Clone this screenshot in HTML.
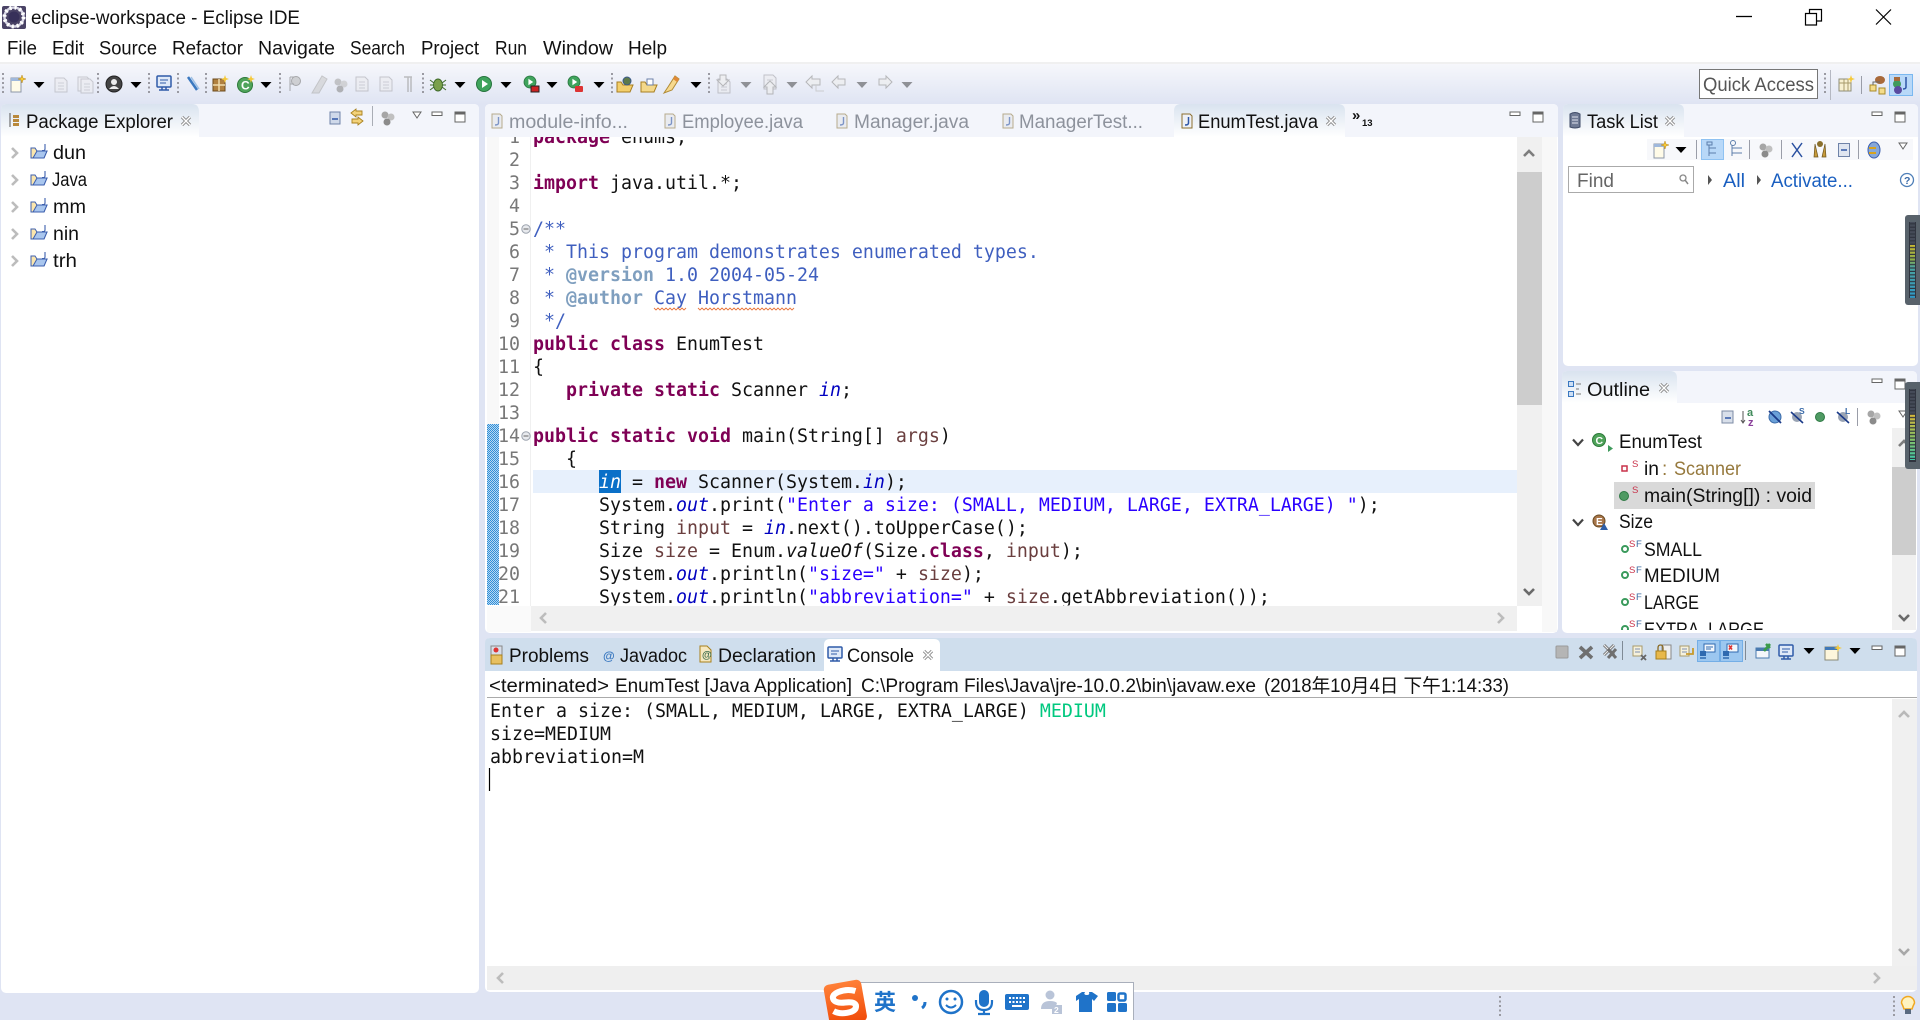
<!DOCTYPE html>
<html lang="en"><head><meta charset="utf-8"><title>eclipse-workspace - Eclipse IDE</title>
<style>
html,body{margin:0;padding:0;width:1920px;height:1020px;overflow:hidden;background:#fff}
svg{display:block}
text{font-family:"Liberation Sans","Noto Sans CJK SC",sans-serif;font-size:19px;fill:#111;white-space:pre}
.m text,text.m,.m tspan{font-family:"DejaVu Sans Mono","Liberation Mono",monospace;font-size:18.27px}
.ln text{fill:#787878;text-anchor:end}
.k{fill:#7f0055;font-weight:bold}.c{fill:#3f5fbf}.t{fill:#7f9fbf;font-weight:bold}.s{fill:#2a00ff}.f{fill:#0000c0;font-style:italic}.v{fill:#6a3e3e}
.g text{fill:#8d929c}
</style></head><body>
<svg width="1920" height="1020" viewBox="0 0 1920 1020" xmlns="http://www.w3.org/2000/svg">
<defs>
<linearGradient id="tb" x1="0" y1="0" x2="0" y2="1"><stop offset="0" stop-color="#f6f7fb"/><stop offset="1" stop-color="#dfe4f3"/></linearGradient>
<linearGradient id="at" x1="0" y1="0" x2="0" y2="1"><stop offset="0" stop-color="#d9e3ef"/><stop offset="1" stop-color="#ffffff"/></linearGradient>
<linearGradient id="og" x1="0" y1="0" x2="0" y2="1"><stop offset="0" stop-color="#ff8038"/><stop offset="1" stop-color="#f04a08"/></linearGradient>
<pattern id="chk" width="2" height="2" patternUnits="userSpaceOnUse"><rect width="2" height="2" fill="#b8d8f2"/><rect width="1" height="1" fill="#2f8fd8"/><rect x="1" y="1" width="1" height="1" fill="#2f8fd8"/></pattern>
<pattern id="stripe" width="5" height="3.400" patternUnits="userSpaceOnUse"><rect y="2.200" width="5" height="1.200" fill="#30343f"/></pattern>
<clipPath id="ed"><rect x="487" y="137" width="1030" height="468.500"/></clipPath>
<clipPath id="ol"><rect x="1566" y="428" width="326" height="202"/></clipPath>
<g id="x"><path d="M-4-4L4 4M4-4L-4 4" stroke="#8a8a8a" stroke-width="3.200" fill="none"/><path d="M-4-4L4 4M4-4L-4 4" stroke="#fff" stroke-width="1.300" fill="none"/></g>
<g id="min"><rect x="-5" y="-2" width="10" height="3.500" fill="#fff" stroke="#666" stroke-width="1"/></g>
<g id="max"><rect x="-5" y="-5" width="10" height="10" fill="#fff" stroke="#666" stroke-width="1"/><rect x="-5" y="-5" width="10" height="2.500" fill="#666"/></g>
<path id="da" d="M-5.500-3H5.500L0 3Z" fill="#000"/>
<path id="vm" d="M-4-3H4L0 3Z" fill="#fff" stroke="#666" stroke-width="1"/>
<path id="cu" d="M-5 3L0-2L5 3" fill="none" stroke="#b9b9b9" stroke-width="2.600"/>
<path id="cd" d="M-5-3L0 2L5-3" fill="none" stroke="#a8a8a8" stroke-width="2.600"/>
<path id="cuD" d="M-5 3L0-2L5 3" fill="none" stroke="#7d7d7d" stroke-width="2.600"/>
<path id="cdD" d="M-5-3L0 2L5-3" fill="none" stroke="#6a6a6a" stroke-width="2.600"/>
<path id="cl" d="M3-5L-2 0L3 5" fill="none" stroke="#bcbcbc" stroke-width="2.600"/>
<path id="cr" d="M-3-5L2 0L-3 5" fill="none" stroke="#bcbcbc" stroke-width="2.600"/>
<g id="grip"><line y1="-11" y2="11" stroke="#9a9aa2" stroke-width="2" stroke-dasharray="2 2.500"/></g>
<g id="jd"><path d="M-5-7H3L5-5V7H-5Z" fill="#e9ebf0" stroke="#b7ab8c"/><path d="M1.500-4V2Q1.500 4-2 4" fill="none" stroke="#7d94c6" stroke-width="1.400"/></g>
<g id="jda"><path d="M-5-7H3L5-5V7H-5Z" fill="#eef1f7" stroke="#8d6f2e"/><path d="M1.500-4V2Q1.500 4-2 4" fill="none" stroke="#2f56a6" stroke-width="1.500"/></g>
<g id="prj"><path d="M-8-4V6H5L8-1H-2L-4-4Z" fill="#fbe6ad" stroke="#3c5fae"/><path d="M-6 6L-2-1H8L5 6Z" fill="#a9c6ee" stroke="#3c5fae"/><path d="M6-8V-3Q6-1 3-1.500" fill="none" stroke="#3c5fae" stroke-width="1.100"/></g>
<g id="new"><path d="M-6-6H4V8H-6Z" fill="#fffbe8" stroke="#8d97a8"/><rect x="-6" y="-6" width="10" height="3" fill="#9fb8dc"/><path d="M5-9L6-6L9-5L6-4L5-1L4-4L1-5L4-6Z" fill="#f5c93a" stroke="#b8861a" stroke-width=".5"/></g>
<g id="gdoc"><path d="M-6-7H3L6-4V7H-6Z" fill="#ececef" stroke="#a9a9b0"/><path d="M-3-2H3M-3 1H3M-3 4H3" stroke="#b8b8bf"/></g>
<circle id="gd" r="4.500" fill="#4f9a63" stroke="#2e7a44"/>
<g id="sf"><circle r="3" fill="#fff" stroke="#3a9a5c" stroke-width="2"/><text x="4" y="-2" style="font-size:9.500px;fill:#c8324a">S</text><text x="11" y="-2" style="font-size:9.500px;fill:#3a6aa0">F</text></g>
<g id="gray"><circle cx="-3" cy="-3" r="3.500" fill="#a6a6a6"/><circle cx="3" cy="-1" r="3.500" fill="#c0c0c0"/><circle cx="-1" cy="4" r="3.500" fill="#8b8b8b"/></g>
<g id="mon"><rect x="-7" y="-7" width="14" height="11" rx="1" fill="#dfe9f8" stroke="#2f5aa8" stroke-width="1.500"/><path d="M-4-3H4M-4 0H2" stroke="#2f5aa8"/><path d="M-5 7H5M-2 4V7M2 4V7" stroke="#2f5aa8" stroke-width="1.500"/></g>
<g id="run"><circle r="7.500" fill="#3fa35c" stroke="#26733d"/><path d="M-2-4L4 0L-2 4Z" fill="#fff"/></g>
<g id="mt"><rect x="-5" y="-5" width="9" height="10" fill="#f6f1dc" stroke="#a89a6b"/><path d="M-3-2H2M-3 1H2" stroke="#7f8fb0"/></g>
<linearGradient id="led1" x1="0" y1="0" x2="0" y2="1"><stop offset="0" stop-color="#c8b832"/><stop offset=".28" stop-color="#8cae4a"/><stop offset=".42" stop-color="#4aa3a0"/><stop offset="1" stop-color="#2f9ac8"/></linearGradient>
<linearGradient id="led2" x1="0" y1="0" x2="0" y2="1"><stop offset="0" stop-color="#d8b83a"/><stop offset=".5" stop-color="#8cc062"/><stop offset="1" stop-color="#3fc8a8"/></linearGradient>
</defs>

<!-- window -->
<rect width="1920" height="62" fill="#fff"/>
<rect y="62" width="1920" height="2" fill="#f0f0f0"/>
<rect y="64" width="1920" height="40" fill="url(#tb)"/>
<rect y="104" width="1920" height="916" fill="#dfe4f3"/>

<!-- title -->
<g transform="translate(14,17)"><rect x="-12" y="-11" width="24" height="23" rx="2" fill="#4a4366"/><circle r="9.500" fill="none" stroke="#d9d7e6" stroke-width="2.500"/><circle r="9.500" fill="none" stroke="#fff" stroke-width="4" stroke-dasharray="2 3"/><circle r="5.500" fill="#37305a"/></g>
<text x="31" y="24" textLength="269" lengthAdjust="spacingAndGlyphs">eclipse-workspace - Eclipse IDE</text>
<path d="M1736 16.500H1752" stroke="#000" stroke-width="1.300"/>
<path d="M1805.500 13.500H1816.500V25H1805.500ZM1809.500 13.500V9.500H1821.500V21H1816.500" fill="none" stroke="#000" stroke-width="1.200"/>
<path d="M1876 9.500L1891 24.500M1891 9.500L1876 24.500" stroke="#000" stroke-width="1.200"/>

<!-- menu -->
<g>
<text x="7" y="54.500" textLength="30" lengthAdjust="spacingAndGlyphs">File</text>
<text x="52" y="54.500" textLength="32" lengthAdjust="spacingAndGlyphs">Edit</text>
<text x="99" y="54.500" textLength="58" lengthAdjust="spacingAndGlyphs">Source</text>
<text x="172" y="54.500" textLength="71" lengthAdjust="spacingAndGlyphs">Refactor</text>
<text x="258" y="54.500" textLength="77" lengthAdjust="spacingAndGlyphs">Navigate</text>
<text x="350" y="54.500" textLength="55" lengthAdjust="spacingAndGlyphs">Search</text>
<text x="421" y="54.500" textLength="58" lengthAdjust="spacingAndGlyphs">Project</text>
<text x="495" y="54.500" textLength="32" lengthAdjust="spacingAndGlyphs">Run</text>
<text x="543" y="54.500" textLength="70" lengthAdjust="spacingAndGlyphs">Window</text>
<text x="628" y="54.500" textLength="39" lengthAdjust="spacingAndGlyphs">Help</text>
</g>

<!-- toolbar -->
<g transform="translate(0,1)">
<use href="#grip" x="3" y="83"/><use href="#new" x="17" y="83"/><use href="#da" x="39" y="84"/>
<g opacity=".55"><use href="#gdoc" x="61" y="84"/><use href="#gdoc" x="84" y="83"/><use href="#gdoc" x="87" y="85"/></g>
<use href="#grip" x="98" y="83"/>
<g transform="translate(114,83)"><circle r="8" fill="#444" stroke="#222"/><circle cy="-2" r="3" fill="#eee"/><path d="M-5 5Q0-1 5 5Z" fill="#eee"/></g><use href="#da" x="136" y="84"/>
<use href="#grip" x="149" y="83"/><use href="#mon" x="164" y="82"/><use href="#grip" x="178" y="83"/>
<g transform="translate(193,83)"><path d="M-5-7L4 6" stroke="#3a78c0" stroke-width="2.500"/><path d="M-2-7L6 5" stroke="#9dbfe4" stroke-width="1.500"/></g>
<use href="#grip" x="206" y="83"/>
<g transform="translate(219,84)"><rect x="-6" y="-6" width="12" height="12" fill="#b08040" stroke="#6b4a1c"/><path d="M-6 0H6M0-6V6" stroke="#f0dcae" stroke-width="1.500"/><path d="M6-10L7-7L10-6L7-5L6-2L5-5L2-6L5-7Z" fill="#f5c93a"/></g>
<g transform="translate(245,84)"><circle r="7.500" fill="#4fa35a" stroke="#2d7a3a"/><text x="-4" y="4.500" style="font-size:12px;font-weight:bold;fill:#fff">C</text><path d="M6-10L7-7L10-6L7-5L6-2L5-5L2-6L5-7Z" fill="#f5c93a"/></g>
<use href="#da" x="266" y="84"/><use href="#grip" x="280" y="83"/>
<g opacity=".6"><g transform="translate(295,83)"><circle cx="1" cy="-3" r="4.500" fill="#bbb" stroke="#777"/><path d="M-5-7V7M-5-7H-1M-5 0H-1" stroke="#777" fill="none"/></g>
<path d="M312 92L322 75L327 78L319 92Z" fill="#ccc" stroke="#aaa"/>
<use href="#gray" x="341" y="84"/><use href="#gdoc" x="362" y="83"/><use href="#gdoc" x="386" y="83"/><path d="M404 76H412M408 76V91M411 76V91" stroke="#999" stroke-width="1.500" fill="none"/></g>
<use href="#grip" x="423" y="83"/>
<g transform="translate(438,84)"><ellipse rx="4.500" ry="6" fill="#7aa04a" stroke="#3e6a2a"/><path d="M-8-5L-4-2M8-5L4-2M-8 5L-4 2M8 5L4 2M-8 0H-4M8 0H4" stroke="#3e6a2a"/></g><use href="#da" x="460" y="84"/>
<use href="#run" x="484" y="83"/><use href="#da" x="506" y="84"/>
<g transform="translate(530,81)"><use href="#run" transform="scale(.8)"/><rect x="1" y="4" width="8" height="6" fill="#c22" stroke="#222"/></g><use href="#da" x="552" y="84"/>
<g transform="translate(574,81)"><use href="#run" transform="scale(.8)"/><rect x="1" y="4" width="8" height="6" rx="1" fill="#d33"/></g><use href="#da" x="599" y="84"/>
<use href="#grip" x="612" y="83"/>
<g transform="translate(625,84)"><path d="M-8-3V7H5L8 0H-2L-4-3Z" fill="#f4cf6c" stroke="#a87f22"/><circle cx="2" cy="-4" r="4" fill="#5f7a4a" stroke="#3a5a8a"/></g>
<g transform="translate(649,84)"><path d="M-8-3V7H5L8 0H-2L-4-3Z" fill="#f4d88a" stroke="#a87f22"/><rect x="-2" y="-6" width="6" height="6" fill="#fff" stroke="#6b7fa8"/></g>
<g transform="translate(672,83)"><path d="M-8 9L-4 3L3-8L7-5L0 6Z" fill="#f7d98e" stroke="#b08b35"/><path d="M3-8L7-5L5-2L1-5Z" fill="#e08a38"/></g><use href="#da" x="696" y="84"/>
<use href="#grip" x="709" y="83"/>
<g opacity=".65"><use href="#gdoc" x="724" y="85"/><path d="M720 74H726V79H729L723 85L717 79H720Z" fill="#eee" stroke="#999"/><use href="#da" x="746" y="84" opacity=".6"/>
<use href="#gdoc" x="770" y="81"/><path d="M767 93V86H764L770 80L776 86H773V93Z" fill="#eee" stroke="#999"/><use href="#da" x="792" y="84" opacity=".6"/>
<path d="M820 78H812V75L806 81L812 87V84H820Z" fill="#eee" stroke="#999"/><path d="M816 84V90H824" fill="none" stroke="#bbb"/>
<path d="M845 78H838V75L832 81L838 87V84H845Z" fill="#eee" stroke="#999"/><use href="#da" x="862" y="84" opacity=".6"/>
<path d="M879 78H886V75L892 81L886 87V84H879Z" fill="#eee" stroke="#999"/><use href="#da" x="907" y="84" opacity=".6"/></g>
</g>

<!-- quick access -->
<rect x="1699.500" y="69.500" width="118" height="29" fill="#fff" stroke="#777"/>
<text x="1703" y="91" textLength="111" lengthAdjust="spacingAndGlyphs" style="fill:#555">Quick Access</text>
<g transform="translate(0,1)">
<use href="#grip" x="1825" y="83"/><line x1="1830.500" y1="69" x2="1830.500" y2="99" stroke="#b5b8c2"/>
<g transform="translate(1845,84)"><rect x="-6" y="-6" width="12" height="12" fill="#f8f0d0" stroke="#8d8d7a"/><path d="M-6-2H6M-1-6V6M3-6V6" stroke="#a89a6b"/><path d="M6-10L7-7L10-6L7-5L6-2L5-5L2-6L5-7Z" fill="#f5c93a"/></g>
<line x1="1861.500" y1="75" x2="1861.500" y2="93" stroke="#9a9da8"/>
<g transform="translate(1877,84)"><ellipse cx="3" cy="-5" rx="5" ry="4" fill="#a8693a"/><rect x="-7" y="0" width="6" height="6" fill="#f4dc8a" stroke="#a88a2a"/><rect x="2" y="3" width="6" height="6" fill="#f4dc8a" stroke="#a88a2a"/><path d="M-4 0V-3H3" stroke="#666" fill="none"/></g>
</g>
<rect x="1889.500" y="74.500" width="23" height="21" fill="#b8d8f8" stroke="#7ab8f0"/>
<g transform="translate(1900,85)"><circle cx="-3" cy="-1" r="4" fill="#3f9a5c"/><circle cx="-2" cy="5" r="4" fill="#5a4aa0"/><rect x="-6" y="-8" width="6" height="4" fill="#a8693a"/><path d="M6-8V2Q6 4 3 4" fill="none" stroke="#2f56a6" stroke-width="1.500"/></g>

<!-- Package Explorer -->
<rect x="1" y="104" width="478" height="889" rx="5" fill="#fff"/>
<path d="M1 137V109Q1 104 6 104H474Q479 104 479 109V137Z" fill="#f3f5fb"/>
<path d="M1 137V109Q1 104 6 104H192Q199 104 199 112V137Z" fill="url(#at)"/>
<g transform="translate(14,120)"><path d="M-4-7V7" stroke="#555"/><rect x="-1" y="-5" width="6" height="3" fill="#b9893c"/><rect x="-1" y="-1" width="6" height="3" fill="#b9893c"/><rect x="-1" y="3" width="6" height="3" fill="#b9893c"/></g>
<text x="26" y="128" textLength="147" lengthAdjust="spacingAndGlyphs">Package Explorer</text>
<use href="#x" x="186" y="121"/>
<g transform="translate(335,118)"><rect x="-5" y="-6" width="10" height="12" fill="#cfd9ea" stroke="#6f83a8"/><path d="M-3 1H3" stroke="#2f56a6" stroke-width="1.500"/></g>
<g transform="translate(357,117)"><path d="M-6-4L-1-8V-6H5V-2H-1V0Z" fill="#f3d27a" stroke="#a8801c" stroke-width=".9"/><path d="M6 4L1 0V2H-5V6H1V8Z" fill="#f3d27a" stroke="#a8801c" stroke-width=".9"/></g>
<line x1="372.500" y1="106" x2="372.500" y2="126" stroke="#a9adb5"/><use href="#gray" x="388" y="118"/>
<use href="#vm" x="417" y="115"/><use href="#min" x="437" y="114"/><use href="#max" x="460" y="117"/>

<use href="#cr" x="15" y="153"/><use href="#cr" x="15" y="180"/><use href="#cr" x="15" y="207"/><use href="#cr" x="15" y="234"/><use href="#cr" x="15" y="261"/>
<use href="#prj" x="39" y="152"/><use href="#prj" x="39" y="179"/><use href="#prj" x="39" y="206"/><use href="#prj" x="39" y="233"/><use href="#prj" x="39" y="260"/>
<text x="53" y="159" textLength="33" lengthAdjust="spacingAndGlyphs">dun</text>
<text x="52" y="186" textLength="35" lengthAdjust="spacingAndGlyphs">Java</text>
<text x="53" y="213" textLength="33" lengthAdjust="spacingAndGlyphs">mm</text>
<text x="53" y="240" textLength="26" lengthAdjust="spacingAndGlyphs">nin</text>
<text x="53" y="267" textLength="24" lengthAdjust="spacingAndGlyphs">trh</text>

<!-- Editor panel -->
<rect x="485" y="104" width="1073" height="529" rx="5" fill="#fff"/>
<path d="M485 137V109Q485 104 490 104H1553Q1558 104 1558 109V137Z" fill="#f3f5fb"/>
<path d="M1174 137V111Q1174 104 1181 104H1338Q1345 104 1345 111V137Z" fill="url(#at)"/>
<g class="g">
<use href="#jd" x="497" y="121"/><text x="509" y="128" textLength="119" lengthAdjust="spacingAndGlyphs">module-info...</text>
<use href="#jd" x="670" y="121"/><text x="682" y="128" textLength="121" lengthAdjust="spacingAndGlyphs">Employee.java</text>
<use href="#jd" x="842" y="121"/><text x="854" y="128" textLength="115" lengthAdjust="spacingAndGlyphs">Manager.java</text>
<use href="#jd" x="1008" y="121"/><text x="1019" y="128" textLength="124" lengthAdjust="spacingAndGlyphs">ManagerTest...</text>
</g>
<use href="#jda" x="1187" y="121"/><text x="1198" y="128" textLength="120" lengthAdjust="spacingAndGlyphs">EnumTest.java</text>
<use href="#x" x="1331" y="121"/>
<text x="1352" y="120" style="font-size:15px;font-weight:bold">»</text><text x="1362" y="126" style="font-size:9.500px;font-weight:bold">13</text>
<use href="#min" x="1515" y="114"/><use href="#max" x="1538" y="117"/>

<rect x="487" y="137" width="12" height="468" fill="#f8f8f8"/>
<rect x="487" y="424" width="12" height="181" fill="url(#chk)"/>
<line x1="530.500" y1="137" x2="530.500" y2="606" stroke="#f0f0f0"/>
<rect x="533" y="470" width="984" height="23" fill="#e7f0fc"/>
<rect x="599" y="470" width="22" height="23" fill="#0a70c8"/>

<g clip-path="url(#ed)">
<g transform="translate(0,1)">
<g class="m ln">
<text x="520" y="142">1</text><text x="520" y="165">2</text><text x="520" y="188">3</text><text x="520" y="211">4</text><text x="520" y="234">5</text><text x="520" y="257">6</text><text x="520" y="280">7</text><text x="520" y="303">8</text><text x="520" y="326">9</text><text x="520" y="349">10</text><text x="520" y="372">11</text><text x="520" y="395">12</text><text x="520" y="418">13</text><text x="520" y="441">14</text><text x="520" y="464">15</text><text x="520" y="487">16</text><text x="520" y="510">17</text><text x="520" y="533">18</text><text x="520" y="556">19</text><text x="520" y="579">20</text><text x="520" y="602">21</text>
</g>
<g class="m">
<text x="533" y="142"><tspan class="k">package</tspan> enums;</text>
<text x="533" y="188"><tspan class="k">import</tspan> java.util.*;</text>
<text x="533" y="234"><tspan class="c">/**</tspan></text>
<text x="533" y="257"><tspan class="c"> * This program demonstrates enumerated types.</tspan></text>
<text x="533" y="280"><tspan class="c"> * </tspan><tspan class="t">@version</tspan><tspan class="c"> 1.0 2004-05-24</tspan></text>
<text x="533" y="303"><tspan class="c"> * </tspan><tspan class="t">@author</tspan><tspan class="c"> Cay Horstmann</tspan></text>
<text x="533" y="326"><tspan class="c"> */</tspan></text>
<text x="533" y="349"><tspan class="k">public</tspan> <tspan class="k">class</tspan> EnumTest</text>
<text x="533" y="372">{</text>
<text x="533" y="395">   <tspan class="k">private</tspan> <tspan class="k">static</tspan> Scanner <tspan class="f">in</tspan>;</text>
<text x="533" y="441"><tspan class="k">public</tspan> <tspan class="k">static</tspan> <tspan class="k">void</tspan> main(String[] <tspan class="v">args</tspan>)</text>
<text x="533" y="464">   {</text>
<text x="533" y="487">      <tspan style="fill:#fff;font-style:italic">in</tspan> = <tspan class="k">new</tspan> Scanner(System.<tspan class="f">in</tspan>);</text>
<text x="533" y="510">      System.<tspan class="f">out</tspan>.print(<tspan class="s">"Enter a size: (SMALL, MEDIUM, LARGE, EXTRA_LARGE) "</tspan>);</text>
<text x="533" y="533">      String <tspan class="v">input</tspan> = <tspan class="f">in</tspan>.next().toUpperCase();</text>
<text x="533" y="556">      Size <tspan class="v">size</tspan> = Enum.<tspan style="font-style:italic">valueOf</tspan>(Size.<tspan class="k">class</tspan>, <tspan class="v">input</tspan>);</text>
<text x="533" y="579">      System.<tspan class="f">out</tspan>.println(<tspan class="s">"size="</tspan> + <tspan class="v">size</tspan>);</text>
<text x="533" y="602">      System.<tspan class="f">out</tspan>.println(<tspan class="s">"abbreviation="</tspan> + <tspan class="v">size</tspan>.getAbbreviation());</text>
</g>
</g>
</g>
<path d="M654 308l2 2l2-2l2 2l2-2l2 2l2-2l2 2l2-2l2 2l2-2l2 2l2-2l2 2l2-2l2 2l2-2M698 308l2 2l2-2l2 2l2-2l2 2l2-2l2 2l2-2l2 2l2-2l2 2l2-2l2 2l2-2l2 2l2-2l2 2l2-2l2 2l2-2l2 2l2-2l2 2l2-2l2 2l2-2l2 2l2-2l2 2l2-2l2 2l2-2l2 2l2-2l2 2l2-2l2 2l2-2l2 2l2-2l2 2l2-2l2 2l2-2l2 2l2-2l2 2l2-2" fill="none" stroke="#e8763c" stroke-width=".9"/>
<g fill="#e8eaee" stroke="#9ba2ad"><circle cx="526" cy="229" r="4.200"/><circle cx="526" cy="436" r="4.200"/></g>
<path d="M523.500 229H528.500M523.500 436H528.500" stroke="#666"/>

<rect x="1517" y="137" width="25" height="469" fill="#f0f0f0"/><rect x="1542" y="137" width="15" height="495" fill="#f8f8f8"/>
<rect x="1517" y="172" width="25" height="233" fill="#cdcdcd"/>
<use href="#cuD" x="1529" y="153"/><use href="#cdD" x="1529" y="592"/>
<rect x="531" y="606" width="986" height="25" fill="#f0f0f0"/><rect x="487" y="606" width="44" height="26" fill="#fafafa"/>
<use href="#cl" x="543" y="618"/><use href="#cr" x="1501" y="618"/>

<!-- Task list -->
<rect x="1563" y="104" width="355" height="262" rx="5" fill="#fff"/>
<path d="M1563 137V109Q1563 104 1568 104H1913Q1918 104 1918 109V137Z" fill="#f3f5fb"/>
<path d="M1563 137V109Q1563 104 1568 104H1677Q1684 104 1684 111V137Z" fill="url(#at)"/>
<g transform="translate(1575,120)"><path d="M-5-6Q0-9 5-6V7Q0 9-5 7Z" fill="#6f7a94" stroke="#3e4a66"/><path d="M-3-3H3M-3 0H3M-3 3H3" stroke="#dfe3ee"/></g>
<text x="1587" y="128" textLength="71" lengthAdjust="spacingAndGlyphs">Task List</text>
<use href="#x" x="1670" y="121"/><use href="#min" x="1877" y="114"/><use href="#max" x="1900" y="117"/>
<rect x="1647" y="139" width="266" height="21" fill="#f7f8fb"/>
<use href="#new" x="1660" y="150"/><use href="#da" x="1681" y="150"/>
<line x1="1696.500" y1="140" x2="1696.500" y2="159" stroke="#9a9da8"/>
<rect x="1701.500" y="139.500" width="22" height="20" fill="#b8d8f8" stroke="#8fc2f2"/>
<g fill="none" stroke="#5c7eab"><path d="M1709 145V156M1709 148H1716M1709 153H1716"/><rect x="1707" y="142" width="5" height="3"/><path d="M1732 145V156M1732 148H1742M1732 153H1742"/><circle cx="1733" cy="143" r="2.500"/></g>
<line x1="1749.500" y1="140" x2="1749.500" y2="159" stroke="#9a9da8"/><use href="#gray" x="1766" y="150"/>
<line x1="1781.500" y1="140" x2="1781.500" y2="159" stroke="#9a9da8"/>
<path d="M1792 143L1802 157M1802 143L1792 157" stroke="#2a50a0" stroke-width="1.500"/>
<g fill="#c79a3a" stroke="#6b5420" stroke-width=".7"><path d="M1815 144L1818 157H1814ZM1825 144L1822 157H1826Z"/></g><circle cx="1820" cy="144" r="3" fill="#8a6f2c"/>
<rect x="1838.500" y="143.500" width="11" height="13" fill="#dfe5f0" stroke="#6f83a8"/><path d="M1841 150H1847" stroke="#2f56a6" stroke-width="1.500"/>
<line x1="1858.500" y1="140" x2="1858.500" y2="159" stroke="#9a9da8"/>
<g transform="translate(1874,150)"><ellipse rx="6" ry="8" fill="#86a7d8" stroke="#3c5fae"/><path d="M-5-2H2M-5 3H2" stroke="#d8a21c" stroke-width="2"/></g>
<use href="#vm" x="1903" y="146"/>
<rect x="1568.500" y="166.500" width="125" height="26" fill="#fff" stroke="#aaa"/>
<text x="1577" y="187" textLength="37" lengthAdjust="spacingAndGlyphs" style="fill:#666">Find</text>
<circle cx="1683" cy="178" r="3" fill="none" stroke="#888" stroke-width="1.300"/><path d="M1685 180L1688 184" stroke="#888" stroke-width="1.500"/>
<path d="M1708 175L1712 180L1708 185Z" fill="#555"/><text x="1723" y="187" textLength="22" lengthAdjust="spacingAndGlyphs" style="fill:#1a5fc0">All</text>
<path d="M1757 175L1761 180L1757 185Z" fill="#555"/><text x="1771" y="187" textLength="82" lengthAdjust="spacingAndGlyphs" style="fill:#1a5fc0">Activate...</text>
<circle cx="1907" cy="180" r="6.500" fill="#fff" stroke="#4f7fb8" stroke-width="1.300"/><text x="1904" y="184" style="font-size:10.500px;font-weight:bold;fill:#3a6aa8">?</text>

<!-- Outline -->
<rect x="1562" y="371" width="355" height="262" rx="5" fill="#fff"/>
<path d="M1562 403V376Q1562 371 1567 371H1912Q1917 371 1917 376V403Z" fill="#f3f5fb"/>
<path d="M1562 403V376Q1562 371 1567 371H1670Q1677 371 1677 378V403Z" fill="url(#at)"/>
<g fill="#cfe0f5" stroke="#3a78c0"><rect x="1568.500" y="381.500" width="5" height="5"/><rect x="1568.500" y="391.500" width="5" height="5"/></g><path d="M1576 384H1581M1576 389H1579M1576 394H1581" stroke="#777"/>
<text x="1587" y="396" textLength="63" lengthAdjust="spacingAndGlyphs">Outline</text>
<use href="#x" x="1664" y="388"/><use href="#min" x="1877" y="381"/><use href="#max" x="1900" y="384"/>
<g transform="translate(1728,417)"><rect x="-6" y="-6" width="11" height="12" fill="#d8dfea" stroke="#7c8ba4"/><path d="M-3 1H3" stroke="#2f56a6" stroke-width="1.500"/></g>
<g transform="translate(1751,417)"><path d="M-8-6V5M-10 3L-8 6L-6 3" fill="none" stroke="#555"/><text x="-4" y="-1" style="font-size:11px;font-weight:bold;fill:#3f8a5a">a</text><text x="-3" y="9" style="font-size:11px;font-weight:bold;fill:#8a3f9a">z</text></g>
<g transform="translate(1775,417)"><circle r="6" fill="#6aa0d8" stroke="#3a6aa8"/><path d="M-6-6L6 6" stroke="#1a3a88" stroke-width="1.800"/></g>
<g transform="translate(1797,417)"><circle r="5" fill="#9aa4b4"/><path d="M-6-5L6 6" stroke="#1a3a88" stroke-width="1.600"/><text x="2" y="-3" style="font-size:8.500px;font-weight:bold;fill:#3a6aa8">S</text></g>
<use href="#gd" x="1820" y="417"/>
<g transform="translate(1843,417)"><circle r="5" fill="#9aa4b4"/><path d="M-6-5L6 6" stroke="#1a3a88" stroke-width="1.600"/><text x="2" y="-3" style="font-size:8.500px;font-weight:bold;fill:#3a6aa8">L</text></g>
<line x1="1857.500" y1="408" x2="1857.500" y2="426" stroke="#9a9da8"/><use href="#gray" x="1874" y="417"/><use href="#vm" x="1903" y="414"/>

<rect x="1614" y="482" width="201" height="27" fill="#d9d9d9"/>
<path d="M1573 439.500L1578 445L1583 439.500M1573 519.500L1578 525L1583 519.500" fill="none" stroke="#444" stroke-width="2.200"/>
<g clip-path="url(#ol)">
<g transform="translate(1599,440)"><circle r="6.500" fill="#4fa35a" stroke="#2d7a3a"/><text x="-3.500" y="4" style="font-size:10.500px;font-weight:bold;fill:#fff">C</text><path d="M9 5L14 8.500L9 12Z" fill="#3f9a5c"/></g>
<text x="1619" y="448" textLength="83" lengthAdjust="spacingAndGlyphs">EnumTest</text>
<rect x="1622" y="466" width="5" height="5" fill="#fff" stroke="#c8324a" stroke-width="1.500"/><text x="1632" y="467" style="font-size:9.500px;fill:#c8324a">S</text>
<text x="1644" y="475" textLength="15" lengthAdjust="spacingAndGlyphs">in</text><text x="1662" y="475" style="fill:#96793d">:</text><text x="1674" y="475" textLength="67" lengthAdjust="spacingAndGlyphs" style="fill:#96793d">Scanner</text>
<use href="#gd" x="1624" y="496"/><text x="1632" y="493" style="font-size:9.500px;fill:#c8324a">S</text>
<text x="1644" y="502" textLength="168" lengthAdjust="spacingAndGlyphs">main(String[]) : void</text>
<g transform="translate(1599,521)"><circle r="6" fill="#a8764a" stroke="#6b4a22"/><text x="-3" y="4" style="font-size:10px;font-weight:bold;fill:#fff">E</text><path d="M1 9L5 2L9 9Z" fill="#2f5fa8"/></g>
<text x="1619" y="528" textLength="34" lengthAdjust="spacingAndGlyphs">Size</text>
<use href="#sf" x="1625" y="549"/><text x="1644" y="556" textLength="58" lengthAdjust="spacingAndGlyphs">SMALL</text>
<use href="#sf" x="1625" y="575"/><text x="1644" y="582" textLength="76" lengthAdjust="spacingAndGlyphs">MEDIUM</text>
<use href="#sf" x="1625" y="602"/><text x="1644" y="609" textLength="55" lengthAdjust="spacingAndGlyphs">LARGE</text>
<use href="#sf" x="1625" y="629"/><text x="1644" y="636" textLength="120" lengthAdjust="spacingAndGlyphs">EXTRA_LARGE</text>
</g>
<rect x="1892" y="428" width="24" height="202" fill="#f0f0f0"/><rect x="1892" y="467" width="24" height="88" fill="#cdcdcd"/>
<use href="#cuD" x="1904" y="443"/><use href="#cdD" x="1904" y="618"/>

<!-- meters -->
<g>
<rect x="1905" y="215" width="20" height="90" rx="3" fill="#58626b"/><rect x="1909" y="222" width="7" height="76" fill="#30343f"/>
<rect x="1910" y="245" width="5" height="53" fill="url(#led1)"/><rect x="1910" y="222" width="5" height="23" fill="#454b58"/><rect x="1910" y="222" width="5" height="76" fill="url(#stripe)"/>
<rect x="1905" y="382" width="20" height="87" rx="3" fill="#58626b"/><rect x="1909" y="389" width="7" height="73" fill="#30343f"/>
<rect x="1910" y="414" width="5" height="46" fill="url(#led2)"/><rect x="1910" y="389" width="5" height="25" fill="#454b58"/><rect x="1910" y="389" width="5" height="71" fill="url(#stripe)"/>
</g>

<!-- Console -->
<rect x="485" y="638" width="1432" height="354" rx="5" fill="#fff"/>
<path d="M485 671V643Q485 638 490 638H1912Q1917 638 1917 643V671Z" fill="#cfdeed"/>
<path d="M824 671V645Q824 639 830 639H934Q940 639 940 645V671Z" fill="#fff"/>
<g transform="translate(496,655)"><rect x="-5" y="-9" width="11" height="9" fill="#d8dee8" stroke="#888"/><circle cy="-5" r="2.500" fill="#d33"/><rect x="-5" y="0" width="11" height="9" fill="#e8c060" stroke="#a8801c"/></g>
<text x="509" y="662" textLength="80" lengthAdjust="spacingAndGlyphs">Problems</text>
<text x="603" y="660" style="font-size:12px;font-weight:bold;fill:#3a78c0">@</text>
<text x="620" y="662" textLength="67" lengthAdjust="spacingAndGlyphs">Javadoc</text>
<g transform="translate(705,654)"><path d="M-5-8H2L6-4V8H-5Z" fill="#f6e8c0" stroke="#a8801c"/><text x="-3" y="4" style="font-size:10px;font-weight:bold;fill:#3a6a4a">@</text></g>
<text x="718" y="662" textLength="98" lengthAdjust="spacingAndGlyphs">Declaration</text>
<use href="#mon" x="835" y="654"/>
<text x="847" y="662" textLength="67" lengthAdjust="spacingAndGlyphs">Console</text>
<use href="#x" x="928" y="655"/>

<rect x="1556" y="646" width="12" height="12" rx="1" fill="#b5b5b5" stroke="#9a9a9a"/>
<path d="M1580 647L1592 658M1592 647L1580 658" stroke="#6f6f6f" stroke-width="3.600"/>
<path d="M1604 645L1614 655M1614 645L1604 655" stroke="#777" stroke-width="3"/><path d="M1604 645L1614 655M1614 645L1604 655" stroke="#eee" stroke-width="1"/><path d="M1608 649L1616 658M1616 649L1608 658" stroke="#6f6f6f" stroke-width="3"/>
<line x1="1622.500" y1="641" x2="1622.500" y2="660" stroke="#7f8a96"/>
<g transform="translate(1638,651)"><use href="#mt"/><path d="M3 4L8 9M8 4L3 9" stroke="#666" stroke-width="1.800"/></g>
<g transform="translate(1663,652)"><rect x="-1" y="-7" width="9" height="14" fill="#eee" stroke="#888"/><path d="M-5-1V-4Q-5-7-2.500-7T0-4V-1" fill="none" stroke="#8a6a22" stroke-width="1.300"/><rect x="-7" y="-1" width="10" height="8" fill="#e8b84a" stroke="#a8801c"/></g>
<g transform="translate(1685,651)"><use href="#mt"/><path d="M8-3V3H1" fill="none" stroke="#c89a2a" stroke-width="1.800"/></g>
<rect x="1697.500" y="640.500" width="22" height="21" fill="#9cc7f0" stroke="#74aee6"/><rect x="1720.500" y="640.500" width="22" height="21" fill="#9cc7f0" stroke="#74aee6"/>
<g transform="translate(1708,651)"><rect x="-4" y="-7" width="11" height="8" fill="#f4f8fd" stroke="#2f6ab0"/><path d="M-2-4H5M-2-2H3" stroke="#2f6ab0"/><rect x="-8" y="0" width="6" height="5" fill="#2f6ab0"/><path d="M-8 7H-2" stroke="#2f6ab0" stroke-width="1.500"/></g>
<g transform="translate(1731,651)"><rect x="-4" y="-7" width="11" height="8" fill="#f4f8fd" stroke="#2f6ab0"/><path d="M-2-5.500L1-1.500M1-5.500L-2-1.500" stroke="#d33" stroke-width="1.600"/><rect x="-8" y="0" width="6" height="5" fill="#2f6ab0"/><path d="M-8 7H-2" stroke="#2f6ab0" stroke-width="1.500"/></g>
<line x1="1745.500" y1="641" x2="1745.500" y2="660" stroke="#7f8a96"/>
<g transform="translate(1763,652)"><rect x="-7" y="-4" width="13" height="10" fill="#f4f6fa" stroke="#4a7ab0"/><rect x="-7" y="-4" width="13" height="3" fill="#4a7ab0"/><path d="M1-1L7-8M3-8L7-4" stroke="#3a9a4a" stroke-width="2.600"/></g>
<use href="#mon" x="1786" y="652"/><use href="#da" x="1809" y="651"/>
<g transform="translate(1832,653)"><rect x="-7" y="-6" width="13" height="13" fill="#fdf6dc" stroke="#8a8a78"/><rect x="-7" y="-6" width="13" height="3" fill="#3f78b8"/><path d="M6-9L7-6L10-5L7-4L6-1L5-4L2-5L5-6Z" fill="#f5c93a"/></g>
<use href="#da" x="1855" y="651"/><use href="#min" x="1877" y="648"/><use href="#max" x="1900" y="651"/>

<text x="489" y="692" textLength="120" lengthAdjust="spacingAndGlyphs">&lt;terminated&gt;</text>
<text x="615" y="692" textLength="237" lengthAdjust="spacingAndGlyphs">EnumTest [Java Application]</text>
<text x="861" y="692" textLength="395" lengthAdjust="spacingAndGlyphs">C:\Program Files\Java\jre-10.0.2\bin\javaw.exe</text>
<text x="1264" y="692" textLength="245" lengthAdjust="spacingAndGlyphs">(2018年10月4日 下午1:14:33)</text>
<line x1="487" y1="697.500" x2="1917" y2="697.500" stroke="#aaa"/>
<g class="m">
<text x="490" y="717">Enter a size: (SMALL, MEDIUM, LARGE, EXTRA_LARGE) <tspan style="fill:#00c87f">MEDIUM</tspan></text>
<text x="490" y="740">size=MEDIUM</text>
<text x="490" y="763">abbreviation=M</text>
</g>
<line x1="489.500" y1="768" x2="489.500" y2="791" stroke="#000" stroke-width="1.200"/>
<rect x="1892" y="699" width="25" height="291" fill="#f0f0f0"/><use href="#cu" x="1904" y="714"/><use href="#cd" x="1904" y="952"/>
<rect x="487" y="966" width="1430" height="24" fill="#efefef"/>
<use href="#cl" x="500" y="978"/><use href="#cr" x="1877" y="978"/>

<!-- status -->
<use href="#grip" x="1500" y="1007"/>
<use href="#grip" x="1894" y="1007"/>
<g transform="translate(1908,1005)"><path d="M-4 4Q-5 1-6.500-2A6.500 6.500 0 1 1 6.500-2Q5 1 4 4Z" fill="#fff3c0" stroke="#f0a820" stroke-width="1.500"/><rect x="-3" y="4" width="6" height="5" fill="#5a6a80"/></g>

<!-- IME -->
<rect x="860.500" y="982.500" width="273" height="40" fill="#fff" stroke="#a9afbb"/>
<g transform="translate(845,1001) rotate(-10)"><rect x="-19" y="-19" width="38" height="42" rx="5" fill="url(#og)"/><path d="M12-8Q4-12-5-10Q-13-8-11-3Q-9 1 0 1.500Q9 2 10 6Q10 12 0 12Q-8 12-13 8" fill="none" stroke="#fff" stroke-width="6"/></g>
<text x="874" y="1010" style="font-family:'Noto Sans CJK SC',sans-serif;font-size:22px;font-weight:bold;fill:#1f73c9">英</text>
<circle cx="915" cy="998" r="3" fill="#1f73c9"/><path d="M925 1002Q925 1006 922 1008" fill="none" stroke="#1f73c9" stroke-width="3"/>
<g transform="translate(951,1002)"><circle r="11" fill="#fff" stroke="#1f73c9" stroke-width="2.500"/><circle cx="-4" cy="-3" r="1.500" fill="#1f73c9"/><circle cx="4" cy="-3" r="1.500" fill="#1f73c9"/><path d="M-5 3Q0 8 5 3" fill="none" stroke="#1f73c9" stroke-width="2"/></g>
<g transform="translate(984,1002)"><rect x="-5" y="-12" width="10" height="17" rx="5" fill="#1f73c9"/><path d="M-8-2V0Q-8 8 0 8Q8 8 8 0V-2M0 8V12M-6 12H6" fill="none" stroke="#1f73c9" stroke-width="2.200"/></g>
<g transform="translate(1017,1002)"><rect x="-12" y="-8" width="24" height="16" rx="2" fill="#1f73c9"/><path d="M-8-4H8M-8 0H8" stroke="#fff" stroke-width="2" stroke-dasharray="2 1.500"/><path d="M-5 4H5" stroke="#fff" stroke-width="2"/></g>
<g transform="translate(1050,1002)"><circle cy="-7" r="4.500" fill="#b9c4d8"/><path d="M-9 7Q-9-1 0-1Q5-1 7 1L5 7Z" fill="#b9c4d8"/><rect x="2" y="3" width="10" height="9" fill="#b9c4d8"/><text x="4" y="11" style="font-size:8.500px;font-weight:bold;fill:#fff">2</text></g>
<path d="M1076 996L1082 992H1085Q1083 995 1087 995Q1090 995 1089 992H1092L1098 996L1094 1001L1092 999V1012H1079V999L1076 1001Z" fill="#1f73c9"/>
<g fill="#1f73c9"><rect x="1107" y="992" width="9" height="9" rx="1.500"/><rect x="1118.500" y="993.500" width="7" height="7" rx="1.500" fill="#fff" stroke="#1f73c9" stroke-width="2.500"/><rect x="1107" y="1003" width="9" height="9" rx="1.500"/><rect x="1118" y="1003" width="9" height="9" rx="1.500"/></g>
</svg>
</body></html>
